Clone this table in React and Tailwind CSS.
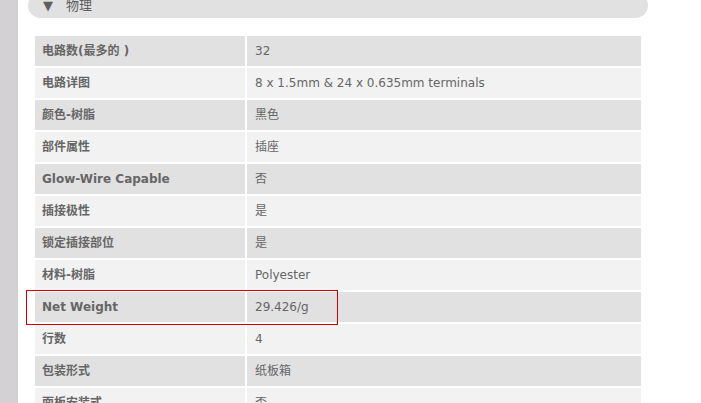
import React from "react";

const rows = [
  ["电路数(最多的 )", "32"],
  ["电路详图", "8 x 1.5mm & 24 x 0.635mm terminals"],
  ["颜色-树脂", "黑色"],
  ["部件属性", "插座"],
  ["Glow-Wire Capable", "否"],
  ["插接极性", "是"],
  ["锁定插接部位", "是"],
  ["材料-树脂", "Polyester"],
  ["Net Weight", "29.426/g", true],
  ["行数", "4"],
  ["包装形式", "纸板箱"],
  ["面板安装式", "否"],
];

const App = () => {
  return (
    <div
      className="flex h-[403px] overflow-hidden bg-white text-[12px] text-[#666]"
      style={{ fontFamily: '"DejaVu Sans", "Noto Sans CJK SC", sans-serif' }}
    >
      <div className="w-[18px] shrink-0 bg-[#d3d1d4]" />
      <div className="flex-1">
        <div className="ml-[10px] mt-[-7px] flex h-[25px] w-[620px] items-center rounded-[13px] bg-[#e1e1e1] pl-[15px] text-[#5e5e5e]">
          <span className="text-[13px]">▼</span>
          <span className="ml-[13px] text-[13px]">物理</span>
        </div>
        <div className="relative ml-[15px] mt-[16px]">
          <table className="w-[610px] border-separate border-spacing-[2px]">
            <tbody>
              {rows.map(([label, value, marked], i) => (
                <tr
                  key={label}
                  className={i % 2 === 0 ? "bg-[#e1e1e1]" : "bg-[#f2f2f2]"}
                >
                  <td className="relative h-[30px] w-[210px] p-0 pl-[7px] font-bold">
                    {marked && (
                      <div className="pointer-events-none absolute left-[-9px] top-[-2px] h-[35px] w-[312px] border border-[#cc0000]" />
                    )}
                    {label}
                  </td>
                  <td className="h-[30px] p-0 pl-[8px]">{value}</td>
                </tr>
              ))}
            </tbody>
          </table>
        </div>
      </div>
    </div>
  );
};

export default App;
